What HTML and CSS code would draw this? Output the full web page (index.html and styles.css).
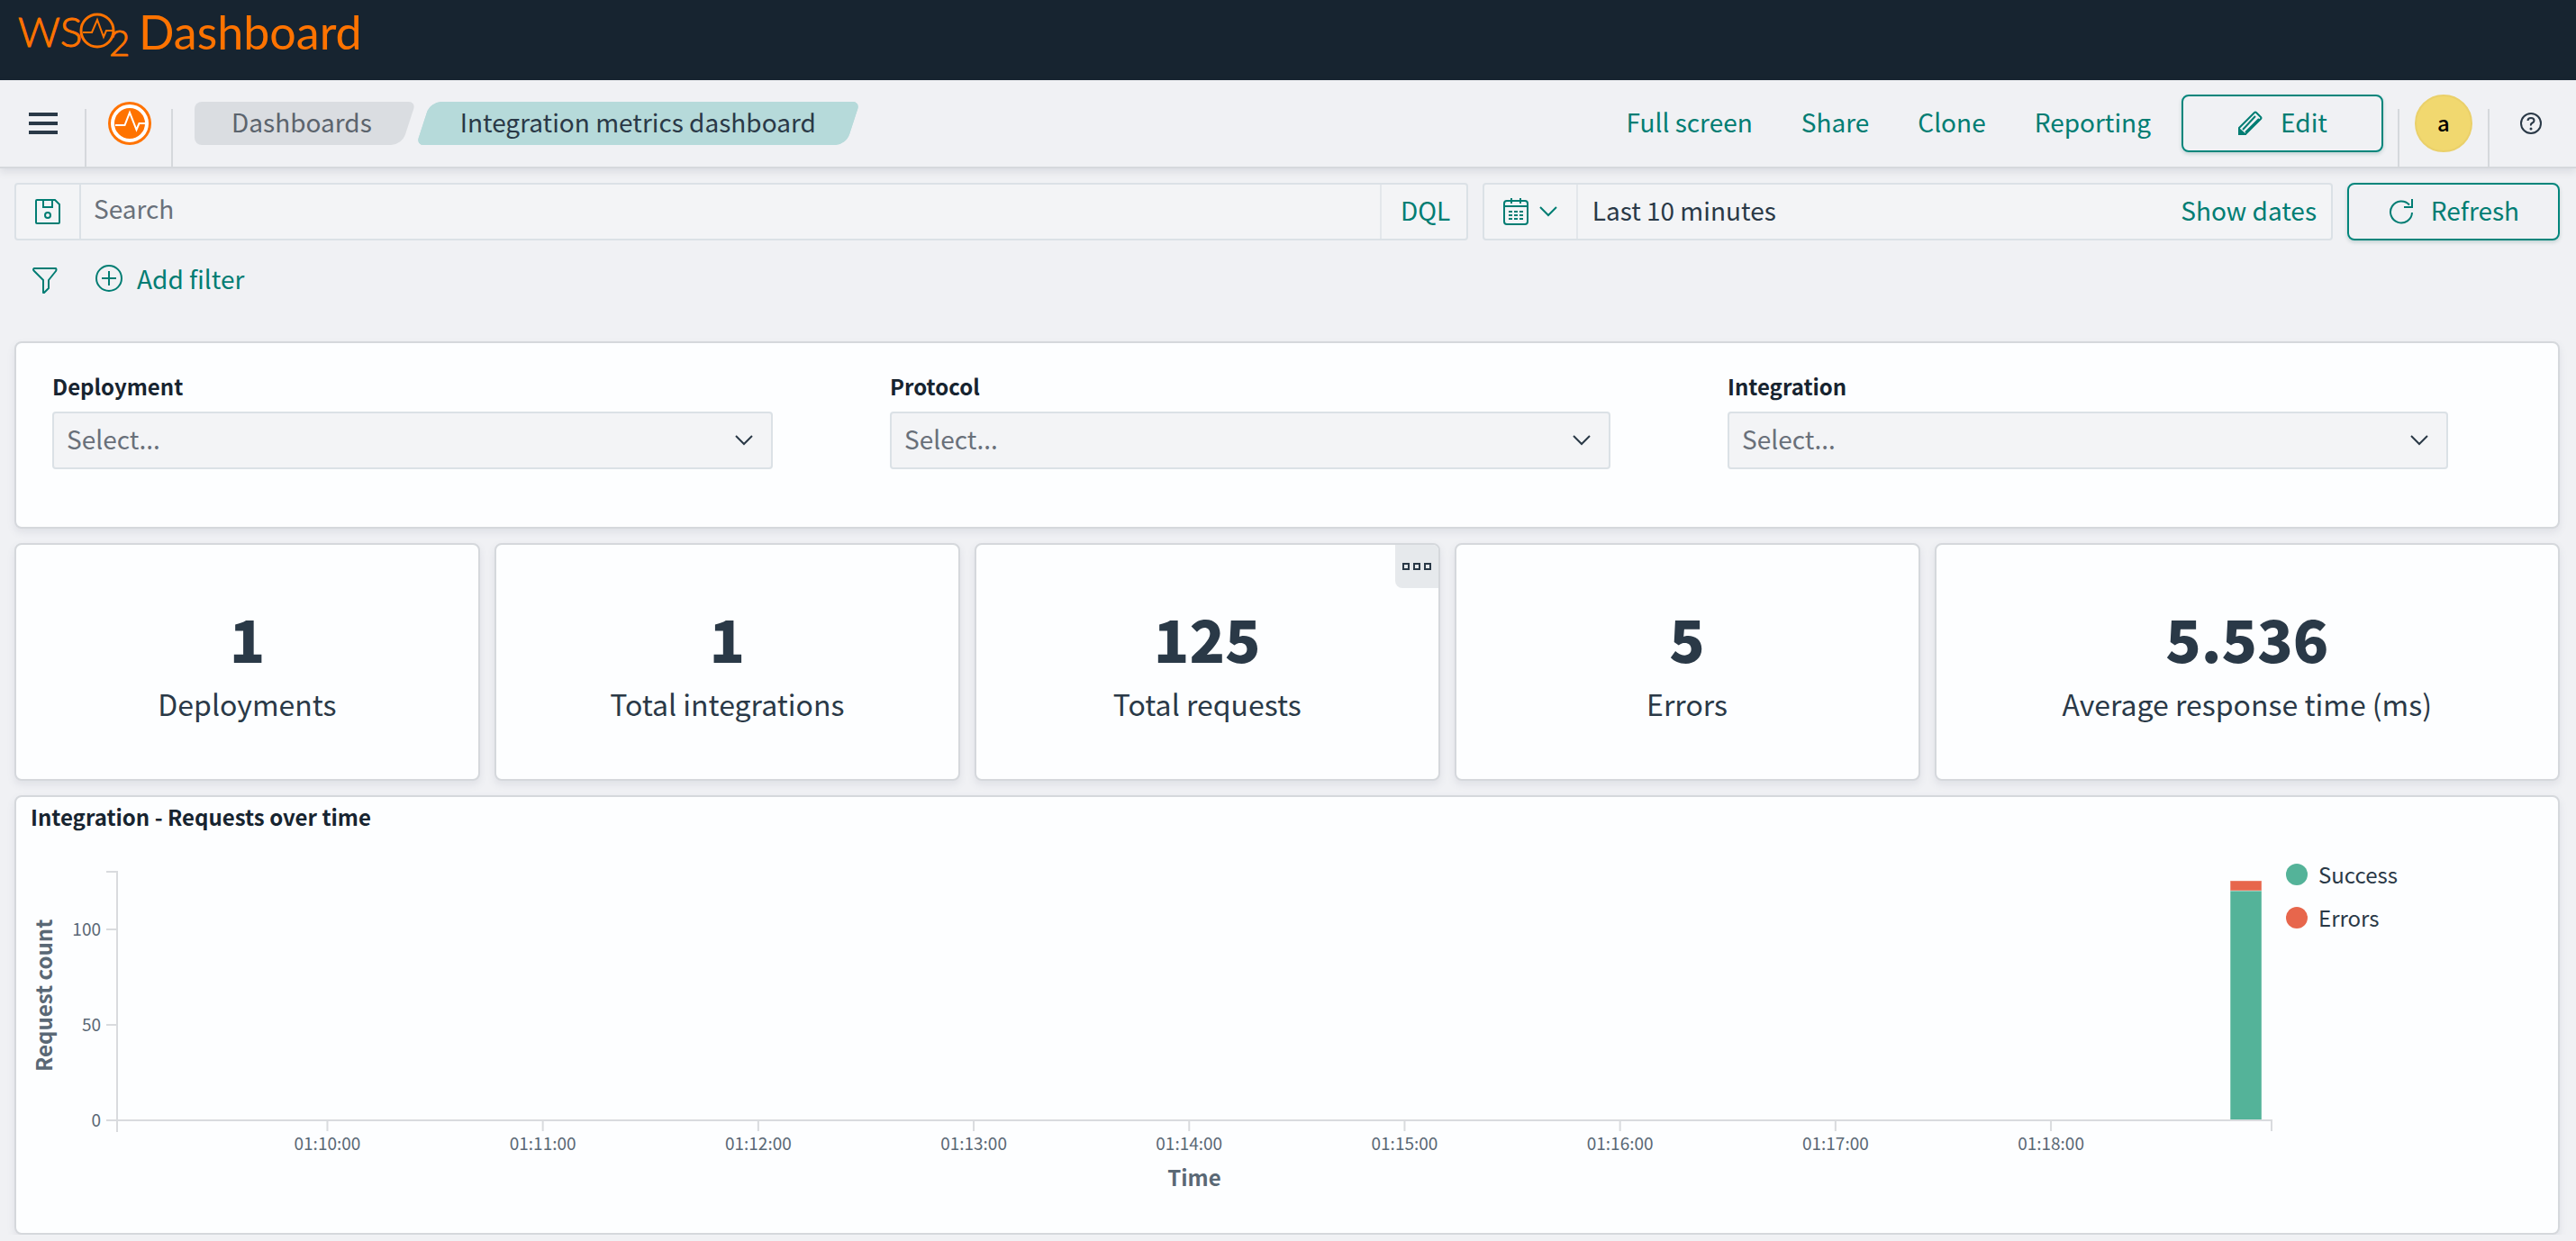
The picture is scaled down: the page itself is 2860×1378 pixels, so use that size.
FILE: index.html
```html
<!DOCTYPE html>
<html lang="en">
<head>
    <meta charset="UTF-8">
    <meta name="viewport" content="width=device-width, initial-scale=1.0">
    <title>Integration metrics dashboard</title>
    <link rel="stylesheet" href="styles.css">
</head>
<body>
    <header class="top-bar">
        <a class="brand" href="#" aria-label="WSO2 Dashboard">
            <svg class="brand-logo" width="124" height="56" viewBox="0 0 124 56">
                <text class="brand-letter" x="0" y="43">WS</text>
                <circle cx="88" cy="25" r="18" fill="none" stroke="#ff7300" stroke-width="3"/>
                <path d="M72 27h10l6-14 7 19 3-7h9" fill="none" stroke="#ff7300" stroke-width="2"/>
                <text class="brand-sub" x="101" y="53">2</text>
            </svg>
            <span class="brand-name">Dashboard</span>
        </a>
    </header>

    <nav class="nav-bar">
        <button class="menu-btn" aria-label="Toggle navigation">
            <svg width="32" height="24" viewBox="0 0 32 24"><path d="M0 0h32v4H0zM0 10h32v4H0zM0 20h32v4H0z" fill="#2a3947"/></svg>
        </button>
        <a class="home-link" href="#" aria-label="Home">
            <svg width="48" height="48" viewBox="0 0 48 48">
                <circle cx="24" cy="24" r="24" fill="#ff7300"/>
                <circle cx="24" cy="24" r="19" fill="#ff7300" stroke="#fff" stroke-width="4"/>
                <path d="M8 26h10.500l5.500-14 7.500 19 3-7H42" fill="none" stroke="#fff" stroke-width="2"/>
            </svg>
        </a>
        <ol class="breadcrumbs">
            <li class="crumb first"><a href="#">Dashboards</a></li>
            <li class="crumb current"><span>Integration metrics dashboard</span></li>
        </ol>
        <div class="nav-links">
            <a href="#">Full screen</a>
            <a href="#">Share</a>
            <a href="#">Clone</a>
            <a href="#">Reporting</a>
        </div>
        <button class="btn edit-btn">
            <svg width="28" height="28" viewBox="2 2 28 28" fill="none" stroke="currentColor" stroke-width="2">
                <path d="M4 21 21 4q1-1 2 0l5 5q1 1 0 2L11 28H4zM8 23 22 8M11 26 26 11"/>
                <path d="M4 21l8 7-1 1H5q-2 0-2-2v-5z" fill="currentColor" stroke="none"/>
            </svg>
            Edit
        </button>
        <button class="avatar-btn" aria-label="Account"><span class="avatar">a</span></button>
        <button class="help-btn" aria-label="Help">
            <svg width="24" height="24" viewBox="0 0 24 24" fill="none" stroke="#2a3947" stroke-width="2">
                <circle cx="12" cy="12" r="11"/>
                <path d="M8.500 9q0-3 3.500-3t3.500 3q0 1.500-2 2.500T12 14.500"/>
                <circle cx="12" cy="18" r="1.500" fill="#2a3947" stroke="none"/>
            </svg>
        </button>
    </nav>

    <main>
        <div class="query-bar">
            <div class="search-box">
                <button class="saved-btn" aria-label="Saved queries">
                    <svg width="28" height="28" viewBox="0 0 28 28" fill="none" stroke="currentColor" stroke-width="2">
                        <path d="M2 1h20l5 5v20q0 1-1 1H2q-1 0-1-1V2q0-1 1-1zM9 1v8h10V1"/>
                        <circle cx="14" cy="18" r="3"/>
                    </svg>
                </button>
                <input type="text" class="search-input" placeholder="Search" aria-label="Search">
                <button class="dql-btn">DQL</button>
            </div>
            <div class="date-box">
                <button class="calendar-btn" aria-label="Date quick select">
                    <svg width="28" height="30" viewBox="0 0 28 30" fill="none" stroke="currentColor" stroke-width="2">
                        <rect x="1" y="3" width="26" height="26" rx="3"/>
                        <path d="M1 9h26M9 0v6M19 0v6"/>
                        <path d="M6 15h16M6 19h16M6 23h16" stroke-dasharray="4 2"/>
                    </svg>
                    <svg width="20" height="12" viewBox="0 0 20 12" fill="none" stroke="currentColor" stroke-width="2"><path d="M1 1l9 9 9-9"/></svg>
                </button>
                <button class="date-range">Last 10 minutes</button>
                <button class="show-dates">Show dates</button>
            </div>
            <button class="btn refresh-btn">
                <svg width="28" height="28" viewBox="0 0 28 28" fill="none" stroke="currentColor" stroke-width="2">
                    <path d="M27 15A12 12 0 1 1 24 6.500M27 0v9h-9"/>
                </svg>
                Refresh
            </button>
        </div>

        <div class="filter-bar">
            <button class="filter-btn" aria-label="Filter options">
                <svg width="28" height="30" viewBox="0 0 28 30" fill="none" stroke="currentColor" stroke-width="2">
                    <path d="M2 2h24q1 1 0 3l-8 10v9l-5 5h-1V15L2 5Q0 3 2 2z" stroke-linejoin="round"/>
                </svg>
            </button>
            <button class="add-filter">
                <svg width="30" height="30" viewBox="0 0 30 30" fill="none" stroke="currentColor" stroke-width="2">
                    <circle cx="15" cy="15" r="14"/>
                    <path d="M15 7v16M7 15h16"/>
                </svg>
                Add filter
            </button>
        </div>

        <div class="dashboard">
            <form class="panel controls">
                <div class="form-group">
                    <label for="deployment">Deployment</label>
                    <div class="select-wrap">
                        <select id="deployment"><option>Select...</option></select>
                        <svg width="20" height="12" viewBox="0 0 20 12"><path d="M1 1l9 9 9-9"/></svg>
                    </div>
                </div>
                <div class="form-group">
                    <label for="protocol">Protocol</label>
                    <div class="select-wrap">
                        <select id="protocol"><option>Select...</option></select>
                        <svg width="20" height="12" viewBox="0 0 20 12"><path d="M1 1l9 9 9-9"/></svg>
                    </div>
                </div>
                <div class="form-group">
                    <label for="integration">Integration</label>
                    <div class="select-wrap">
                        <select id="integration"><option>Select...</option></select>
                        <svg width="20" height="12" viewBox="0 0 20 12"><path d="M1 1l9 9 9-9"/></svg>
                    </div>
                </div>
            </form>

            <section class="panel metric">
                <div class="metric-value">1</div>
                <div class="metric-label">Deployments</div>
            </section>
            <section class="panel metric">
                <div class="metric-value">1</div>
                <div class="metric-label">Total integrations</div>
            </section>
            <section class="panel metric">
                <button class="panel-menu" aria-label="Panel options">
                    <svg width="32" height="8" viewBox="0 0 32 8" fill="none" stroke="#2a3947" stroke-width="2">
                        <path d="M1 1h6v6H1zM13 1h6v6h-6zM25 1h6v6h-6z"/>
                    </svg>
                </button>
                <div class="metric-value">125</div>
                <div class="metric-label">Total requests</div>
            </section>
            <section class="panel metric">
                <div class="metric-value">5</div>
                <div class="metric-label">Errors</div>
            </section>
            <section class="panel metric wide">
                <div class="metric-value">5.536</div>
                <div class="metric-label">Average response time (ms)</div>
            </section>

            <section class="panel chart-panel">
                <h2>Integration - Requests over time</h2>
                <div class="chart">
                    <div class="axis-title y-title">Request count</div>
                    <svg class="plot" width="100%" height="310">
                        <g class="bars">
                            <rect x="98.080%" y="22" width="1.460%" height="255" fill="#54b399"/>
                            <rect x="98.080%" y="11" width="1.460%" height="11" fill="#e7664c"/>
                        </g>
                        <g class="axis">
                            <line x1="0" y1="0" x2="0" y2="290"/>
                            <line x1="-12" y1="1" x2="0" y2="1"/>
                            <line x1="-12" y1="65" x2="0" y2="65"/>
                            <line x1="-12" y1="171" x2="0" y2="171"/>
                            <line x1="-12" y1="277" x2="100%" y2="277"/>
                            <line x1="9.760%" y1="277" x2="9.760%" y2="289"/>
                            <line x1="19.760%" y1="277" x2="19.760%" y2="289"/>
                            <line x1="29.760%" y1="277" x2="29.760%" y2="289"/>
                            <line x1="39.760%" y1="277" x2="39.760%" y2="289"/>
                            <line x1="49.760%" y1="277" x2="49.760%" y2="289"/>
                            <line x1="59.760%" y1="277" x2="59.760%" y2="289"/>
                            <line x1="69.760%" y1="277" x2="69.760%" y2="289"/>
                            <line x1="79.760%" y1="277" x2="79.760%" y2="289"/>
                            <line x1="89.760%" y1="277" x2="89.760%" y2="289"/>
                            <line x1="100%" y1="276" x2="100%" y2="289"/>
                        </g>
                        <g class="y-ticks">
                            <text x="-18" y="72">100</text>
                            <text x="-18" y="178">50</text>
                            <text x="-18" y="284">0</text>
                        </g>
                        <g class="x-ticks">
                            <text x="9.760%" y="310">01:10:00</text>
                            <text x="19.760%" y="310">01:11:00</text>
                            <text x="29.760%" y="310">01:12:00</text>
                            <text x="39.760%" y="310">01:13:00</text>
                            <text x="49.760%" y="310">01:14:00</text>
                            <text x="59.760%" y="310">01:15:00</text>
                            <text x="69.760%" y="310">01:16:00</text>
                            <text x="79.760%" y="310">01:17:00</text>
                            <text x="89.760%" y="310">01:18:00</text>
                        </g>
                    </svg>
                    <ul class="legend">
                        <li><span class="dot success"></span>Success</li>
                        <li><span class="dot errors"></span>Errors</li>
                    </ul>
                    <div class="axis-title x-title">Time</div>
                </div>
            </section>
        </div>
    </main>
</body>
</html>
```
FILE: styles.css
```css
* {
    box-sizing: border-box;
}
body {
    margin: 0;
    background: #f0f1f4;
    color: #2a3947;
    font-family: "Noto Sans CJK SC", "Noto Sans", sans-serif;
    font-size: 28px;
    line-height: 40px;
}
a {
    color: #017d73;
    text-decoration: none;
}
button {
    display: flex;
    align-items: center;
    justify-content: center;
    margin: 0;
    padding: 0;
    border: none;
    background: none;
    color: #017d73;
    font: inherit;
    white-space: nowrap;
    cursor: pointer;
}
svg {
    display: block;
    flex: none;
}

/* header */
.top-bar {
    height: 89px;
    padding: 9px 20px;
    background: #172430;
}
.brand {
    display: inline-flex;
    gap: 10px;
    color: #ff7300;
    font-family: Lato, sans-serif;
}
.brand-logo {
    overflow: visible;
}
.brand-letter,
.brand-sub {
    fill: #ff7300;
    stroke: #ff7300;
    stroke-width: 1;
    font-weight: 300;
    font-size: 46px;
}
.brand-sub {
    font-size: 40px;
}
.brand-name {
    font-size: 52px;
    line-height: 52px;
}
.nav-bar {
    position: relative;
    display: flex;
    align-items: center;
    height: 98px;
    border-bottom: 2px solid #d5d8dc;
    box-shadow: 0 4px 8px rgba(100, 110, 130, 0.15);
}
.menu-btn {
    width: 94px;
    height: 48px;
    padding-left: 2px;
}
.home-link,
.avatar-btn,
.help-btn {
    position: relative;
    display: flex;
    align-items: center;
    justify-content: center;
    width: 98px;
    height: 96px;
}
.home-link {
    padding-left: 2px;
}
.home-link::before,
.home-link::after,
.avatar-btn::before,
.avatar-btn::after {
    content: "";
    position: absolute;
    left: 0;
    bottom: 0;
    width: 2px;
    height: 64px;
    background: #d5d8dc;
}
.home-link::after,
.avatar-btn::after {
    left: auto;
    right: 0;
}
.breadcrumbs {
    display: flex;
    gap: 16px;
    margin: 0 auto 0 24px;
    padding: 0;
    list-style: none;
}
.crumb {
    position: relative;
    z-index: 0;
    padding: 2px 41px 6px;
    white-space: nowrap;
}
.crumb a {
    color: #5c646d;
}
.crumb::before,
.crumb::after {
    content: "";
    position: absolute;
    z-index: -1;
    inset: 0;
    border-radius: 12px 8px 12px 8px;
    background: #dadde1;
    transform: skewX(-18deg);
}
.crumb.first::after {
    right: 24px;
    border-radius: 8px;
    transform: none;
}
.crumb.first::before {
    left: 24px;
}
.crumb.current::before,
.crumb.current::after {
    background: #b6dada;
}
.nav-links {
    display: flex;
    gap: 54px;
    margin-right: 34px;
    padding-bottom: 4px;
    white-space: nowrap;
}
.btn {
    gap: 20px;
    height: 64px;
    padding-bottom: 4px;
    border: 2px solid #01857b;
    border-radius: 8px;
    box-shadow: 0 2px 4px rgba(1, 80, 75, 0.2);
}
.btn svg {
    margin-top: 4px;
}
.edit-btn {
    width: 224px;
    margin-right: 16px;
}
.avatar-btn {
    width: 102px;
}
.avatar {
    width: 64px;
    height: 64px;
    border: 2px solid #ead06a;
    border-radius: 50%;
    background: #f1d86f;
    color: #000;
    font-size: 24px;
    font-weight: 500;
    line-height: 58px;
}
.help-btn {
    width: 96px;
    padding-right: 4px;
}

/* query bar */
main {
    padding: 16px 18px 0 16px;
}
.query-bar {
    display: flex;
    gap: 16px;
}
.search-box,
.date-box {
    display: flex;
    height: 64px;
    border: 2px solid #dbe1e6;
    border-radius: 4px;
    background: #f3f4f6;
}
.search-box {
    flex: 1616;
}
.date-box {
    flex: 944;
}
.saved-btn {
    width: 72px;
    border-right: 2px solid #dbe1e6;
}
.search-input {
    flex: 1;
    min-width: 0;
    padding: 0 14px 8px;
    border: none;
    background: none;
    color: #2a3947;
    font: inherit;
    outline: none;
}
.search-input::placeholder {
    color: #69707a;
    opacity: 1;
}
.dql-btn {
    width: 96px;
    padding: 0 0 4px 4px;
    border-left: 2px solid #e3e7eb;
}
.calendar-btn {
    gap: 12px;
    width: 104px;
    border-right: 2px solid #e3e7eb;
}
.date-range {
    flex: 1;
    justify-content: flex-start;
    padding: 0 0 4px 16px;
    color: #2a3947;
}
.show-dates {
    padding: 0 16px 4px;
}
.refresh-btn {
    width: 236px;
}
.filter-bar {
    display: flex;
    align-items: center;
    gap: 42px;
    height: 88px;
    margin-bottom: 24px;
    padding: 0 20px;
}
.add-filter {
    gap: 16px;
    padding-bottom: 4px;
}

/* panels */
.dashboard {
    display: grid;
    grid-template-columns: repeat(48, 1fr);
    gap: 16px;
}
.panel {
    position: relative;
    border: 2px solid #d5d8dc;
    border-radius: 8px;
    background: #fdfeff;
    box-shadow: 0 4px 8px rgba(100, 110, 130, 0.12);
}
.controls {
    grid-column: span 48;
    display: grid;
    grid-template-columns: repeat(3, 1fr);
    gap: 130px;
    height: 208px;
    padding: 28px 122px 0 40px;
}
.form-group label {
    display: block;
    margin-bottom: 8px;
    color: #172430;
    font-size: 24px;
    font-weight: 700;
}
.select-wrap {
    position: relative;
}
.select-wrap select {
    width: 100%;
    height: 64px;
    padding: 0 14px 4px;
    border: 2px solid #dbe1e6;
    border-radius: 4px;
    background: #f3f4f6;
    color: #69707a;
    font: inherit;
    appearance: none;
}
.select-wrap svg {
    position: absolute;
    top: 26px;
    right: 22px;
    fill: none;
    stroke: #2a3947;
    stroke-width: 2;
    pointer-events: none;
}
.metric {
    grid-column: span 9;
    height: 264px;
    padding-top: 62px;
    text-align: center;
}
.metric.wide {
    grid-column: span 12;
}
.metric-value {
    font-size: 65px;
    font-weight: 900;
    line-height: 82px;
}
.metric-label {
    font-size: 32px;
    line-height: 64px;
}
.panel-menu {
    position: absolute;
    top: 0;
    right: 0;
    width: 48px;
    height: 48px;
    border-radius: 0 6px 0 8px;
    background: #e6e9ec;
}

/* chart */
.chart-panel {
    grid-column: span 48;
    height: 488px;
    padding: 2px 16px;
}
.chart-panel h2 {
    margin: 0 0 40px;
    color: #172430;
    font-size: 24px;
    font-weight: 700;
}
.chart {
    display: grid;
    grid-template-columns: 28px 1fr 302px;
}
.axis-title {
    color: #5a6875;
    font-size: 24px;
    font-weight: 700;
    text-align: center;
}
.y-title {
    height: 277px;
    line-height: 28px;
    writing-mode: vertical-rl;
    transform: rotate(180deg);
}
.plot {
    width: calc(100% - 68px);
    margin-left: 68px;
    overflow: visible;
}
.axis {
    stroke: #d9dbde;
    stroke-width: 2;
}
.x-ticks,
.y-ticks {
    fill: #5a6875;
    font-size: 19px;
}
.x-ticks {
    text-anchor: middle;
}
.y-ticks {
    text-anchor: end;
}
.bars {
    stroke: #fff;
    stroke-opacity: 0.4;
}
.x-title {
    grid-column: 2;
    margin: 10px 0 0 68px;
}
.legend {
    margin: -20px 0 0;
    padding: 0 0 0 16px;
    list-style: none;
    font-size: 24px;
}
.legend li {
    display: flex;
    align-items: center;
    gap: 12px;
    height: 48px;
}
.dot {
    width: 24px;
    height: 24px;
    border-radius: 50%;
}
.dot.success {
    background: #54b399;
}
.dot.errors {
    background: #e7664c;
}
```
